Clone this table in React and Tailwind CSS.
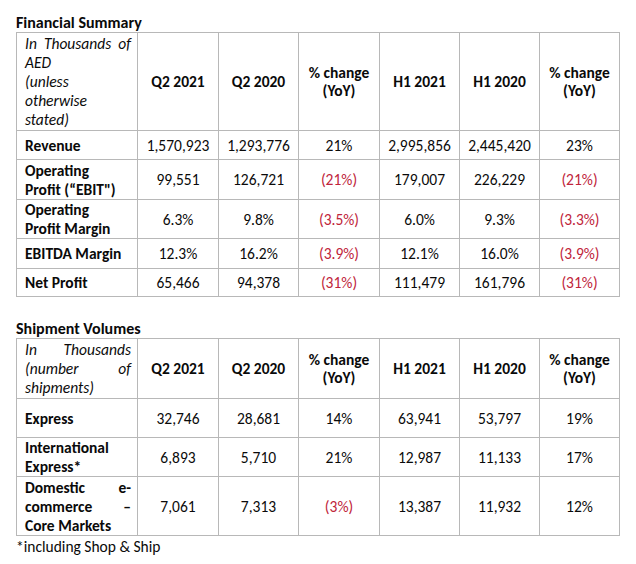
const font = { fontFamily: "Carlito, Lato, 'Open Sans', sans-serif" };

const finRows = [
  { label: ["Revenue"], h: "h-[29px]", v: ["1,570,923", "1,293,776", "21%", "2,995,856", "2,445,420", "23%"] },
  { label: ["Operating", "Profit (“EBIT\")"], h: "h-[40px]", v: ["99,551", "126,721", "(21%)", "179,007", "226,229", "(21%)"] },
  { label: ["Operating", "Profit Margin"], h: "h-[39px]", v: ["6.3%", "9.8%", "(3.5%)", "6.0%", "9.3%", "(3.3%)"] },
  { label: ["EBITDA Margin"], h: "h-[30px]", v: ["12.3%", "16.2%", "(3.9%)", "12.1%", "16.0%", "(3.9%)"] },
  { label: ["Net Profit"], h: "h-[28px]", v: ["65,466", "94,378", "(31%)", "111,479", "161,796", "(31%)"] },
];

const shipRows = [
  { label: ["Express"], justify: false, h: "h-[39px]", v: ["32,746", "28,681", "14%", "63,941", "53,797", "19%"] },
  { label: ["International", "Express*"], justify: false, h: "h-[39px]", v: ["6,893", "5,710", "21%", "12,987", "11,133", "17%"] },
  { label: ["Domestic e-", "commerce –", "Core Markets"], justify: true, h: "h-[59px]", v: ["7,061", "7,313", "(3%)", "13,387", "11,932", "12%"] },
];

function Cols() {
  return (
    <colgroup>
      <col className="w-[121px]" />
      <col className="w-[81px]" />
      <col className="w-[80px]" />
      <col className="w-[81px]" />
      <col className="w-[80px]" />
      <col className="w-[80px]" />
      <col className="w-[80px]" />
    </colgroup>
  );
}

function Head({ first }) {
  const cell = "border border-[#b8b8b8] text-center align-middle font-bold px-1 leading-[18px]";
  return (
    <tr className={first.h}>
      <td className="border border-[#b8b8b8] align-top pl-[8px] pr-[6px] pt-[1px] italic">
        {first.lines.map((l, i) => (
          <div key={i} className={l.j ? "text-justify [text-align-last:justify] whitespace-nowrap" : ""}>{l.t}</div>
        ))}
      </td>
      <td className={cell}>Q2 2021</td>
      <td className={cell}>Q2 2020</td>
      <td className={cell}>% change<br />(YoY)</td>
      <td className={cell}>H1 2021</td>
      <td className={cell}>H1 2020</td>
      <td className={cell}>% change<br />(YoY)</td>
    </tr>
  );
}

function Row({ r }) {
  return (
    <tr className={r.h}>
      <td className="border border-[#b8b8b8] align-middle pl-[8px] pr-[6px] font-bold">
        {r.label.map((l, i) => (
          <div key={i} className={r.justify && i < 2 ? "text-justify [text-align-last:justify]" : "whitespace-nowrap"}>{l}</div>
        ))}
      </td>
      {r.v.map((x, i) => (
        <td key={i} className={"border border-[#b8b8b8] text-center align-middle whitespace-nowrap " + (x.startsWith("(") ? "text-[#c0243a]" : "")}>
          {x}
        </td>
      ))}
    </tr>
  );
}

export default function App() {
  return (
    <div className="w-[636px] h-[564px] bg-white text-[#0a0a0a] text-[15.5px] leading-[19px] pl-[16px] pt-[13px]" style={font}>
      <div className="font-bold h-[19px] text-[16px]">Financial Summary</div>
      <table className="table-fixed border-collapse w-[603px]">
        <Cols />
        <tbody>
          <Head
            first={{
              h: "h-[98px]",
              lines: [
                { t: "In Thousands of", j: true },
                { t: "AED" },
                { t: "(unless" },
                { t: "otherwise" },
                { t: "stated)" },
              ],
            }}
          />
          {finRows.map((r, i) => (
            <Row key={i} r={r} />
          ))}
        </tbody>
      </table>
      <div className="font-bold h-[19px] mt-[22px] text-[16px]">Shipment Volumes</div>
      <table className="table-fixed border-collapse w-[603px]">
        <Cols />
        <tbody>
          <Head
            first={{
              h: "h-[60px]",
              lines: [
                { t: "In Thousands", j: true },
                { t: "(number of", j: true },
                { t: "shipments)" },
              ],
            }}
          />
          {shipRows.map((r, i) => (
            <Row key={i} r={r} />
          ))}
        </tbody>
      </table>
      <div className="mt-[1px]">*including Shop &amp; Ship</div>
    </div>
  );
}
